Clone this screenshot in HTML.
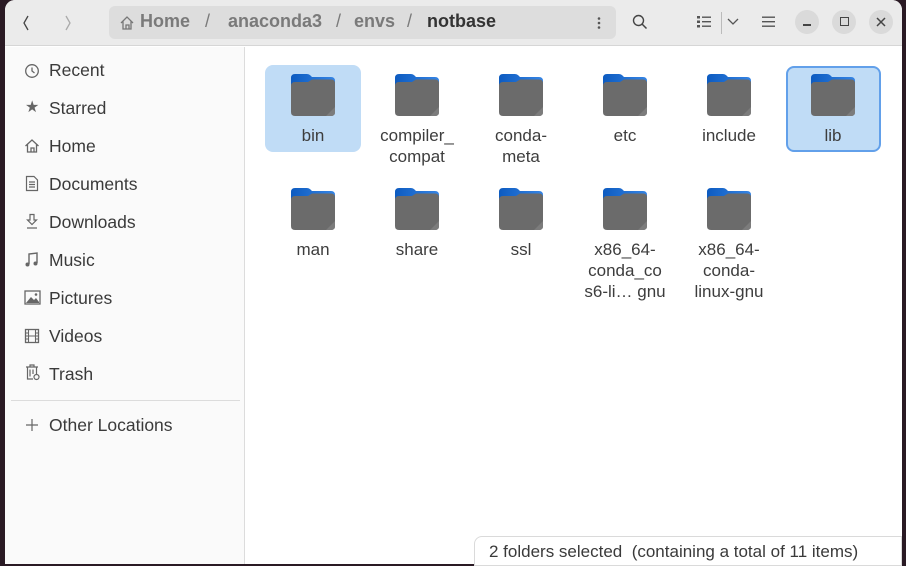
<!DOCTYPE html>
<html><head><meta charset="utf-8"><style>
*{margin:0;padding:0;box-sizing:border-box}
body{width:906px;height:564px;overflow:hidden;background:#2a1a24;font-family:"Liberation Sans",sans-serif;color:#3d3d3d;position:relative}
#win{position:absolute;left:5px;top:0;width:897px;height:564px;background:#fff;border-radius:10px 10px 0 0;overflow:hidden}
#hdr{position:absolute;left:0;top:0;width:897px;height:46px;background:#ebebeb;border-bottom:1px solid #d6d6d6}
#side{position:absolute;left:0;top:47px;width:240px;height:517px;background:#fafafa;border-right:1px solid #dcdcdc}
.abs{position:absolute}
.si{position:absolute;left:44px;font-size:17.5px;color:#3a3a3a}
.ic{position:absolute;left:19px}
.crumb{position:absolute;left:104px;top:6px;width:507px;height:33px;background:#dddddd;border-radius:6px}
.lbl{position:absolute;width:100px;text-align:center;font-size:17px;line-height:21px;color:#3d3d3d}
.sel{position:absolute;background:#c0dcf6;border-radius:8px}
.circ{position:absolute;top:10px;width:24px;height:24px;border-radius:50%;background:#dadada}
</style></head><body>
<div id="win">
<div id="hdr">
 <svg class="abs" style="left:16px;top:14px" width="12" height="18"><path d="M7 2 L3 9 L7 16" stroke="#444" stroke-width="1.3" fill="none"/></svg>
 <svg class="abs" style="left:58px;top:14px" width="12" height="18"><path d="M3 2 L7 9 L3 16" stroke="#aaa" stroke-width="1.3" fill="none"/></svg>
 <div class="crumb">
  <svg class="abs" style="left:10px;top:9px" width="16" height="16"><path d="M2 8 L8 2 L14 8 M4 6.5 V14 H12 V6.5 M7 14 V10 H10 V14" stroke="#777" stroke-width="1.3" fill="none"/></svg>
  <span class="abs" style="left:31px;top:5px;font-size:18px;font-weight:bold;color:#7a7a7a">Home</span>
  <span class="abs" style="left:96px;top:5px;font-size:18px;color:#7a7a7a">/</span>
  <span class="abs" style="left:119px;top:5px;font-size:18px;font-weight:bold;color:#7a7a7a">anaconda3</span>
  <span class="abs" style="left:227px;top:5px;font-size:18px;color:#7a7a7a">/</span>
  <span class="abs" style="left:245px;top:5px;font-size:18px;font-weight:bold;color:#7a7a7a">envs</span>
  <span class="abs" style="left:298px;top:5px;font-size:18px;color:#7a7a7a">/</span>
  <span class="abs" style="left:318px;top:5px;font-size:18px;font-weight:bold;color:#333">notbase</span>
  <svg class="abs" style="left:488px;top:10px" width="4" height="14"><circle cx="2" cy="2.5" r="1.3" fill="#555"/><circle cx="2" cy="7" r="1.3" fill="#555"/><circle cx="2" cy="11.5" r="1.3" fill="#555"/></svg>
 </div>
 <svg class="abs" style="left:627px;top:14px" width="16" height="16"><circle cx="6.5" cy="6.5" r="5" stroke="#444" stroke-width="1.4" fill="none"/><path d="M10 10 L14.5 14.5" stroke="#444" stroke-width="1.5"/></svg>
 <svg class="abs" style="left:692px;top:16px" width="14" height="12"><g fill="#555"><rect x="0" y="0" width="3" height="2.5"/><rect x="0" y="4.5" width="3" height="2.5"/><rect x="0" y="9" width="3" height="2.5"/><rect x="5" y="0.5" width="9" height="1.4"/><rect x="5" y="5" width="9" height="1.4"/><rect x="5" y="9.5" width="9" height="1.4"/></g></svg>
 <div class="abs" style="left:716px;top:12px;width:1px;height:22px;background:#bbb"></div>
 <svg class="abs" style="left:722px;top:17px" width="12" height="10"><path d="M1 2 L6 7 L11 2" stroke="#555" stroke-width="1.3" fill="none"/></svg>
 <svg class="abs" style="left:757px;top:16px" width="13" height="12"><g fill="#555"><rect y="0.5" width="13" height="1.4"/><rect y="5" width="13" height="1.4"/><rect y="9.5" width="13" height="1.4"/></g></svg>
 <div class="circ" style="left:790px"><div class="abs" style="left:8px;top:14px;width:8px;height:1.5px;background:#444"></div></div>
 <div class="circ" style="left:827px"><div class="abs" style="left:8px;top:7px;width:9px;height:9px;border:1.5px solid #444"></div></div>
 <div class="circ" style="left:864px"><svg class="abs" style="left:7px;top:7px" width="10" height="10"><path d="M1 1 L9 9 M9 1 L1 9" stroke="#444" stroke-width="1.5"/></svg></div>
</div>

<div id="side">
 <svg class="ic" style="top:16px" width="16" height="16"><circle cx="8" cy="8" r="6.3" stroke="#666" stroke-width="1.3" fill="none"/><path d="M8 4.5 V8 L10.5 10" stroke="#666" stroke-width="1.3" fill="none"/></svg>
 <div class="si" style="top:13px">Recent</div>
 <div class="ic" style="top:50px;font-size:16px;color:#666;left:20px">★</div>
 <div class="si" style="top:51px">Starred</div>
 <svg class="ic" style="top:91px" width="16" height="16"><path d="M1.5 8 L8 2 L14.5 8 M3.5 6.5 V14 H12.5 V6.5 M7 14 V10 H10 V14" stroke="#666" stroke-width="1.3" fill="none"/></svg>
 <div class="si" style="top:89px">Home</div>
 <svg class="ic" style="top:128px" width="16" height="17"><path d="M2.5 1.5 H10 L13.5 5 V15.5 H2.5 Z M5 7 H11 M5 9.5 H11 M5 12 H11" stroke="#666" stroke-width="1.2" fill="none"/></svg>
 <div class="si" style="top:127px">Documents</div>
 <svg class="ic" style="top:166px" width="16" height="17"><path d="M6 1.5 H10 V7 H12.5 L8 11.5 L3.5 7 H6 Z M3 15 H13" stroke="#666" stroke-width="1.2" fill="none"/></svg>
 <div class="si" style="top:165px">Downloads</div>
 <svg class="ic" style="top:204px" width="16" height="17"><path d="M5 13 V3 L13 2 V12" stroke="#666" stroke-width="1.4" fill="none"/><circle cx="3.5" cy="13.5" r="2" fill="#666"/><circle cx="11.5" cy="12.5" r="2" fill="#666"/></svg>
 <div class="si" style="top:203px">Music</div>
 <svg class="ic" style="top:243px" width="17" height="15"><rect x="1" y="1" width="15" height="13" stroke="#666" stroke-width="1.3" fill="none"/><path d="M2 13 L7 7 L10 10 L12 8 L15 12 V13 Z" fill="#666"/><circle cx="12" cy="4.5" r="1.3" fill="#666"/></svg>
 <div class="si" style="top:241px">Pictures</div>
 <svg class="ic" style="top:281px" width="16" height="16"><rect x="1.5" y="1.5" width="13" height="13" stroke="#666" stroke-width="1.3" fill="none"/><path d="M4.5 1.5 V14.5 M11.5 1.5 V14.5 M1.5 8 H14.5 M1.5 5 H4.5 M1.5 11 H4.5 M11.5 5 H14.5 M11.5 11 H14.5" stroke="#666" stroke-width="1.1"/></svg>
 <div class="si" style="top:279px">Videos</div>
 <svg class="ic" style="top:316px" width="17" height="18"><path d="M2 4 H14 M6 4 V2 H10 V4 M3.5 4 V16 H9 M12.5 4 V11 M6 6.5 V13.5 M9 6.5 V11" stroke="#666" stroke-width="1.2" fill="none"/><circle cx="12.5" cy="14" r="2.5" stroke="#666" stroke-width="1.2" fill="none"/></svg>
 <div class="si" style="top:317px">Trash</div>
 <div class="abs" style="left:6px;top:353px;width:229px;height:1px;background:#dcdcdc"></div>
 <svg class="ic" style="top:370px" width="16" height="16"><path d="M8 2 V14 M2 8 H14" stroke="#666" stroke-width="1.2"/></svg>
 <div class="si" style="top:368px">Other Locations</div>
</div>

<div class="sel" style="left:260px;top:65px;width:96px;height:87px"></div>
<div class="sel" style="left:781px;top:66px;width:95px;height:86px;border:2px solid #62a0ea"></div>
</div>

<svg width="0" height="0" style="position:absolute"><defs>
<linearGradient id="tb" x1="0" y1="0" x2="1" y2="0"><stop offset="0" stop-color="#0d5bc0"/><stop offset="1" stop-color="#3584e4"/></linearGradient>
<symbol id="f" viewBox="0 0 48 44"><path d="M2 5 Q2 1 6 1 H18 Q20 1 21.5 2.5 L23 4 H42 Q46 4 46 8 V20 H2 Z" fill="url(#tb)"/><path d="M2 13 Q2 9 6 9 H19 L23 6.5 H42 Q46 6.5 46 10.5 V39 Q46 43 42 43 H6 Q2 43 2 39 Z" fill="#6b6b6b"/><path d="M37 43 L46 34 V39 Q46 43 42 43 Z" fill="#7c7c7c"/></symbol>
</defs></svg>
<div style="position:absolute;left:5px;top:0">
<svg class="abs" style="left:284px;top:73px" width="48" height="44"><use href="#f"/></svg>
<svg class="abs" style="left:388px;top:73px" width="48" height="44"><use href="#f"/></svg>
<svg class="abs" style="left:492px;top:73px" width="48" height="44"><use href="#f"/></svg>
<svg class="abs" style="left:596px;top:73px" width="48" height="44"><use href="#f"/></svg>
<svg class="abs" style="left:700px;top:73px" width="48" height="44"><use href="#f"/></svg>
<svg class="abs" style="left:804px;top:73px" width="48" height="44"><use href="#f"/></svg>
<svg class="abs" style="left:284px;top:187px" width="48" height="44"><use href="#f"/></svg>
<svg class="abs" style="left:388px;top:187px" width="48" height="44"><use href="#f"/></svg>
<svg class="abs" style="left:492px;top:187px" width="48" height="44"><use href="#f"/></svg>
<svg class="abs" style="left:596px;top:187px" width="48" height="44"><use href="#f"/></svg>
<svg class="abs" style="left:700px;top:187px" width="48" height="44"><use href="#f"/></svg>
<div class="lbl" style="left:258px;top:125px">bin</div>
<div class="lbl" style="left:362px;top:125px">compiler_<br>compat</div>
<div class="lbl" style="left:466px;top:125px">conda-<br>meta</div>
<div class="lbl" style="left:570px;top:125px">etc</div>
<div class="lbl" style="left:674px;top:125px">include</div>
<div class="lbl" style="left:778px;top:125px">lib</div>
<div class="lbl" style="left:258px;top:239px">man</div>
<div class="lbl" style="left:362px;top:239px">share</div>
<div class="lbl" style="left:466px;top:239px">ssl</div>
<div class="lbl" style="left:570px;top:239px">x86_64-<br>conda_co<br>s6-li… gnu</div>
<div class="lbl" style="left:674px;top:239px">x86_64-<br>conda-<br>linux-gnu</div>
<div class="abs" style="left:469px;top:536px;width:428px;height:30px;background:#fff;border:1px solid #dadada;border-radius:8px 0 0 0;font-size:17px;padding:5px 0 0 14px;color:#3a3a3a;white-space:nowrap">2 folders selected&nbsp; (containing a total of 11 items)</div>
</div>
</body></html>
